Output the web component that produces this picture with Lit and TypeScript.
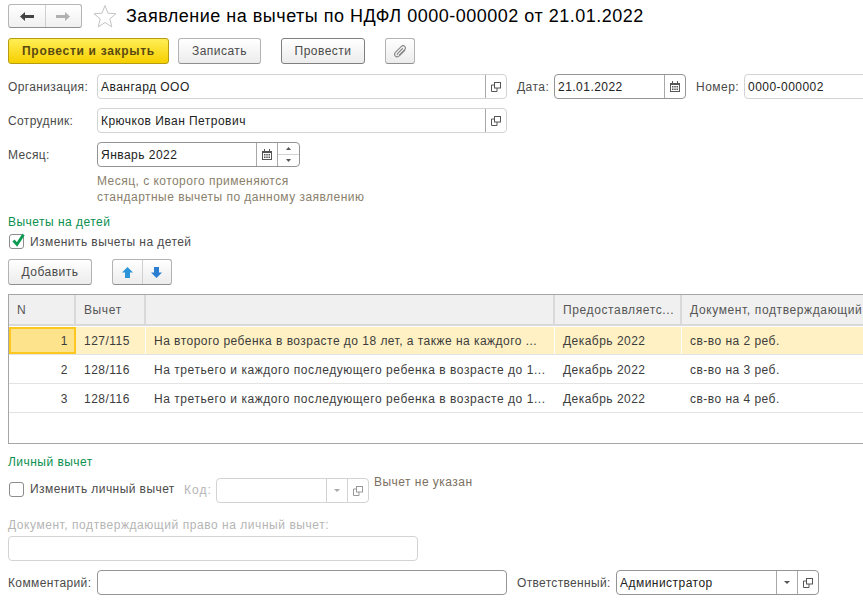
import { LitElement, html, css, svg } from "lit";
import { customElement } from "lit/decorators.js";

const linkIcon = (c = "#555") => svg`<svg width="10" height="10" viewBox="0 0 10 10" fill="none" stroke="${c}" stroke-width="1"><rect x="3.5" y="0.5" width="6" height="5.500" fill="#fff"/><path d="M3.500 3H.5V9.500H6V6"/></svg>`;
const calIcon = svg`<svg width="10" height="11" viewBox="0 0 10 11"><path fill="#555" d="M0 2h2V0h1v2h4V0h1v2h2v9H0z"/><path fill="#fff" d="M1 4h8v6H1z"/><path fill="#555" d="M2 5h1.500v1.500H2zM4.250 5h1.500v1.500h-1.500zM6.500 5H8v1.500H6.500zM2 7.500h1.500V9H2zM4.250 7.500h1.500V9h-1.500zM6.500 7.500H8V9H6.500z"/></svg>`;
const drop = (c = "#555") => svg`<svg width="6" height="3" viewBox="0 0 6 3"><path fill="${c}" d="M0 0h6L3 3z"/></svg>`;

@customElement("app-root")
export class AppRoot extends LitElement {
  static styles = css`
    :host { display: block; width: 863px; height: 606px; overflow: hidden; background: #fff; font: 12px "Liberation Sans", Arial, sans-serif; letter-spacing: 0.47px; color: #4a4a4a; }
    * { box-sizing: border-box; }
    .page { padding: 4px 0 0 8px; width: 1000px; }
    .row { display: flex; align-items: center; }
    .top { height: 24px; }
    .nav { width: 74px; height: 24px; display: flex; border: 1px solid #b5b5b5; border-bottom-color: #8f8f8f; border-radius: 3px; background: linear-gradient(#fff, #f0f0f0); }
    .nav span { flex: 1; display: flex; align-items: center; justify-content: center; }
    .nav span + span { border-left: 1px solid #cfcfcf; }
    .star { margin-left: 11px; display: flex; }
    h1 { margin: 0 0 0 9px; font: 400 18px "Liberation Sans", Arial, sans-serif; letter-spacing: 0.5px; color: #000; white-space: nowrap; }
    .btn { height: 26px; border: 1px solid #b3b3b3; border-bottom-color: #8f8f8f; border-radius: 3px; background: linear-gradient(#fff, #ececec); display: flex; align-items: center; justify-content: center; color: #4a4a4a; }
    .actions { margin-top: 10px; }
    .primary { width: 161px; background: linear-gradient(#ffee55, #f6cf00); border-color: #b59c10; font-weight: 700; letter-spacing: 0.7px; color: #5a4a10; }
    .save { width: 83px; margin-left: 9px; }
    .post { width: 84px; margin-left: 20px; border-color: #7f7f7f; }
    .clip { width: 30px; margin-left: 20px; }
    .org { margin-top: 10px; }
    .fieldrow { margin-top: 9px; }
    .lbl { width: 89px; white-space: nowrap; letter-spacing: 0.37px; }
    .field { height: 25px; display: flex; border: 1px solid #d3d3d3; border-radius: 4px; background: #fff; color: #222; flex: none; }
    .field.focus { border-color: #949494; }
    .field .val { flex: 1; padding: 0 3px; line-height: 24px; white-space: nowrap; overflow: hidden; }
    .field .ic { width: 21px; flex: none; border-left: 1px solid #a8a8a8; display: flex; align-items: center; justify-content: center; }
    .field.dis .ic { border-left-color: #d3d3d3; }
    .w410 { width: 410px; }
    .date { width: 132px; }
    .num { width: 140px; }
    .month { width: 203px; }
    .spin { width: 22px; flex: none; border-left: 1px solid #a8a8a8; display: flex; flex-direction: column; }
    .spin i { flex: 1; display: flex; align-items: center; justify-content: center; font-size: 0; }
    .spin i + i { border-top: 1px solid #d3d3d3; }
    .l-date { margin-left: 10px; width: 37px; white-space: nowrap; }
    .l-num { margin-left: 10px; width: 48px; white-space: nowrap; }
    .hint { margin: 6px 0 0 89px; line-height: 16px; color: #8a7f6c; }
    .group { color: #0a8f50; line-height: 14px; }
    .g1 { margin-top: 10px; }
    .check { width: 15px; height: 15px; border: 1px solid #8c8c8c; border-radius: 3px; background: #fff; flex: none; position: relative; }
    .check svg { position: absolute; left: 1px; top: -3px; }
    .chkrow1 { margin-top: 5px; height: 15px; padding-left: 1px; }
    .chklabel { margin-left: 6px; white-space: nowrap; letter-spacing: 0.43px; }
    .tools { margin-top: 10px; }
    .add { width: 84px; }
    .arrows { width: 60px; height: 26px; margin-left: 20px; display: flex; border: 1px solid #b3b3b3; border-bottom-color: #8f8f8f; border-radius: 3px; background: linear-gradient(#fff, #ececec); }
    .arrows span { flex: 1; display: flex; align-items: center; justify-content: center; }
    .arrows span + span { border-left: 1px solid #cfcfcf; }
    .table { margin-top: 9px; height: 150px; width: 992px; border: 1px solid #a6a6a6; }
    .tr { display: grid; grid-template-columns: 67px 70px 409px 127px 1fr; }
    .head { height: 31px; border-bottom: 2px solid #d9d9d9; }
    .head > div { background: #f0f0f0; border-right: 2px solid #d9d9d9; padding: 0 8px; line-height: 30px; color: #555; white-space: nowrap; overflow: hidden; letter-spacing: 0.62px; }
    .body { height: 29px; border-bottom: 1px solid #e3e3e3; }
    .body > div { padding: 1px 8px 0; line-height: 28px; white-space: nowrap; overflow: hidden; color: #3c3c3c; }
    .body > .long { letter-spacing: 0.55px; }
    .body > .n { text-align: right; }
    .sel { height: 29px; padding-top: 1px; border-bottom: 1px solid #e3e3e3; background: #fff; }
    .sel > div { padding: 0 8px; background: #fff1c4; border-right: 1px solid #fff; height: 27px; line-height: 28px; white-space: nowrap; overflow: hidden; color: #3c3c3c; }
    .sel > .n { text-align: right; background: #fde38c; border: 2px solid #fcc71f; line-height: 24px; padding-right: 6px; height: 27px; }
    .g2 { margin-top: 11px; }
    .pers { margin-top: 9px; align-items: flex-start; padding-left: 1px; }
    .pers .check { margin-top: 4px; }
    .pers .chklabel { line-height: 23px; width: 150px; }
    .kod { margin-left: 4px; width: 32px; line-height: 25px; color: #b5b5b5; letter-spacing: 1px; }
    .code { width: 153px; }
    .noded { margin-left: 5px; line-height: 14px; color: #7b705f; white-space: nowrap; margin-top: -3px; }
    .doc { margin-top: 15px; line-height: 14px; color: #b5b5b5; letter-spacing: 0.55px; }
    .docf { margin-top: 4px; width: 410px; }
    .bottom { margin-top: 9px; }
    .l-resp { margin-left: 10px; width: 99px; white-space: nowrap; letter-spacing: 0.33px; }
    .resp { width: 203px; }
  `;

  render() {
    const link = html`<span class="ic">${linkIcon()}</span>`;
    const cal = html`<span class="ic">${calIcon}</span>`;
    const row = (n: string, a: string, b: string, d: string, sel = false, long = false) => html`
      <div class="tr ${sel ? "sel" : "body"}">
        <div class="n">${n}</div><div>${a}</div><div class="${long ? "long" : ""}">${b}</div><div>Декабрь 2022</div><div>${d}</div>
      </div>`;
    return html`<div class="page">
      <div class="row top">
        <div class="nav">
          <span><svg width="14" height="9" viewBox="0 0 14 9"><path fill="#444" d="M0 4.500L5 0v3h9v3H5v3z"/></svg></span>
          <span><svg width="14" height="9" viewBox="0 0 14 9"><path fill="#b0b0b0" d="M14 4.500L9 0v3H0v3h9v3z"/></svg></span>
        </div>
        <span class="star"><svg width="24" height="24" viewBox="0 0 24 24" fill="#fff" stroke="#c4c4c4"><path d="M12 1.500l3 7.700 8 .5-6.200 5.200 2 8L12 18.500l-6.800 4.400 2-8L1 9.700l8-.5z"/></svg></span>
        <h1>Заявление на вычеты по НДФЛ 0000-000002 от 21.01.2022</h1>
      </div>

      <div class="row actions">
        <div class="btn primary">Провести и закрыть</div>
        <div class="btn save">Записать</div>
        <div class="btn post">Провести</div>
        <div class="btn clip"><svg width="13" height="13" viewBox="0 0 14 14" fill="none" stroke="#888" stroke-width="1.200"><path d="M12 5.500L6 11.500c-1.500 1.500-3.500 1.500-4.500.5S.5 9 2 7.500L8 1.500c1-1 2.500-1 3.500 0s1 2.500 0 3.500L5.500 11M9.500 3.500L4 9c-.6.6-.6 1.200 0 1.600"/></svg></div>
      </div>

      <div class="row org">
        <div class="lbl">Организация:</div>
        <div class="field w410"><span class="val">Авангард ООО</span>${link}</div>
        <div class="l-date">Дата:</div>
        <div class="field date focus"><span class="val">21.01.2022</span>${cal}</div>
        <div class="l-num">Номер:</div>
        <div class="field num"><span class="val">0000-000002</span></div>
      </div>

      <div class="row fieldrow">
        <div class="lbl">Сотрудник:</div>
        <div class="field w410"><span class="val">Крючков Иван Петрович</span>${link}</div>
      </div>

      <div class="row fieldrow">
        <div class="lbl">Месяц:</div>
        <div class="field month focus"><span class="val">Январь 2022</span>${cal}
          <span class="spin">
            <i><svg width="5" height="3" viewBox="0 0 5 3"><path fill="#555" d="M2.500 0L5 3H0z"/></svg></i>
            <i><svg width="5" height="3" viewBox="0 0 5 3"><path fill="#555" d="M0 0h5L2.500 3z"/></svg></i>
          </span>
        </div>
      </div>

      <div class="hint">Месяц, с которого применяются<br />стандартные вычеты по данному заявлению</div>

      <div class="group g1">Вычеты на детей</div>
      <div class="row chkrow1">
        <span class="check"><svg width="16" height="16" viewBox="0 0 16 16" fill="none" stroke="#0a9a50" stroke-width="2.800"><path d="M2.500 8.500l3.500 4 6.500-10"/></svg></span>
        <span class="chklabel">Изменить вычеты на детей</span>
      </div>

      <div class="row tools">
        <div class="btn add">Добавить</div>
        <div class="arrows">
          <span><svg width="11" height="11" viewBox="0 0 11 11"><path fill="#2c94d8" d="M5.500 0L11 5.500H8V11H3V5.500H0z"/></svg></span>
          <span><svg width="11" height="11" viewBox="0 0 11 11"><path fill="#2c7fd0" d="M5.500 11L11 5.500H8V0H3v5.500H0z"/></svg></span>
        </div>
      </div>

      <div class="table">
        <div class="tr head"><div>N</div><div>Вычет</div><div></div><div>Предоставляетс...</div><div>Документ, подтверждающий</div></div>
        ${row("1", "127/115", "На второго ребенка в возрасте до 18 лет, а также на каждого ...", "св-во на 2 реб.", true)}
        ${row("2", "128/116", "На третьего и каждого последующего ребенка в возрасте до 1...", "св-во на 3 реб.", false, true)}
        ${row("3", "128/116", "На третьего и каждого последующего ребенка в возрасте до 1...", "св-во на 4 реб.", false, true)}
      </div>

      <div class="group g2">Личный вычет</div>
      <div class="row pers">
        <span class="check"></span>
        <span class="chklabel">Изменить личный вычет</span>
        <span class="kod">Код:</span>
        <div class="field code dis"><span class="val"></span><span class="ic">${drop("#aaa")}</span><span class="ic">${linkIcon("#999")}</span></div>
        <span class="noded">Вычет не указан</span>
      </div>

      <div class="doc">Документ, подтверждающий право на личный вычет:</div>
      <div class="field docf dis"></div>

      <div class="row bottom">
        <div class="lbl">Комментарий:</div>
        <div class="field w410 focus"><span class="val"></span></div>
        <div class="l-resp">Ответственный:</div>
        <div class="field resp focus"><span class="val">Администратор</span><span class="ic">${drop()}</span>${link}</div>
      </div>
    </div>`;
  }
}
